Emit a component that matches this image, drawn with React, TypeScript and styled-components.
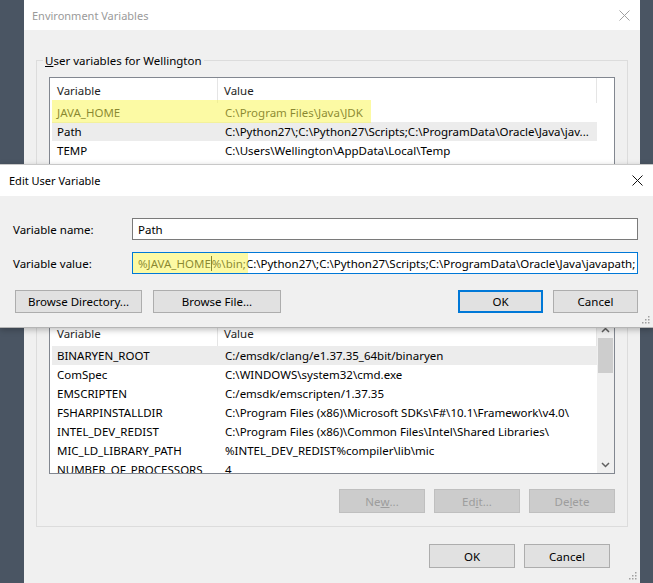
import React from 'react';
import styled, { createGlobalStyle } from 'styled-components';

const GlobalStyle = createGlobalStyle`
  * { box-sizing: border-box; }
  html, body { margin: 0; padding: 0; background: #4a5563; }
  body {
    font-family: "Noto Sans", "Segoe UI", sans-serif;
    font-size: 11.5px;
    color: #000;
  }
`;

const Screen = styled.div`
  position: relative;
  width: 653px;
  height: 583px;
  overflow: hidden;
  background: #4a5563;
  padding-left: 24px;
`;

const MainWindow = styled.div`
  position: relative;
  width: 616px;
  height: 600px;
  background: #f0f0f0;
  display: flex;
  flex-direction: column;
`;

const TitleBar = styled.div<{ $height: number; $pl: number; $pr: number }>`
  height: ${(p) => p.$height}px;
  flex: none;
  background: #fff;
  display: flex;
  align-items: center;
  justify-content: space-between;
  padding: 0 ${(p) => p.$pr}px 0 ${(p) => p.$pl}px;
`;

const TitleText = styled.span<{ $inactive?: boolean }>`
  font-size: 11px;
  color: ${(p) => (p.$inactive ? '#9a9a9a' : '#000')};
`;

const Body = styled.div`
  padding: 22px 12px 0 12px;
  display: flex;
  flex-direction: column;
`;

const GroupBox = styled.fieldset<{ $mt: number }>`
  margin: ${(p) => p.$mt}px 0 0 0;
  border: 1px solid #dcdcdc;
  padding: 8px 12px 13px 12px;
  min-width: 0;
`;

const Legend = styled.legend`
  padding: 1px 2px 0 2px;
  margin-left: -6px;
  line-height: 16px;
  font-size: 11.5px;
`;

const ListView = styled.div`
  height: 154px;
  border: 1px solid #828790;
  background: #fff;
  display: flex;
  overflow: hidden;
`;

const Table = styled.div`
  flex: 1;
  display: flex;
  flex-direction: column;
  min-width: 0;
`;

const HeaderRow = styled.div`
  height: 25px;
  flex: none;
  display: flex;
`;

const HeaderCell = styled.div<{ $w: number; $pl: number }>`
  width: ${(p) => p.$w}px;
  flex: none;
  border-right: 1px solid #e5e5e5;
  padding-left: ${(p) => p.$pl}px;
  display: flex;
  align-items: center;
  color: #1e1e1e;
  white-space: nowrap;
`;

const Row = styled.div<{ $selected?: boolean }>`
  position: relative;
  height: 19px;
  flex: none;
  margin-left: 2px;
  width: 545px;
  display: flex;
  align-items: center;
  background: ${(p) => (p.$selected ? '#ececec' : 'transparent')};
`;

const Cell = styled.div<{ $w: number; $pl: number }>`
  width: ${(p) => p.$w}px;
  flex: none;
  padding-left: ${(p) => p.$pl}px;
  white-space: nowrap;
  overflow: hidden;
`;

const RowMarker = styled.div`
  position: absolute;
  left: 0;
  top: -3px;
  width: 319px;
  height: 23px;
  background: rgba(250, 245, 90, 0.55);
  z-index: 1;
  pointer-events: none;
`;

const ScrollBar = styled.div`
  width: 17px;
  flex: none;
  background: #f0f0f0;
  display: flex;
  flex-direction: column;
`;

const ScrollArrow = styled.div`
  height: 17px;
  flex: none;
  display: flex;
  align-items: center;
  justify-content: center;
`;

const ScrollTrack = styled.div`
  flex: 1;
  display: flex;
  flex-direction: column;
  padding: 0 1px;
`;

const Thumb = styled.div`
  height: 35px;
  background: #cdcdcd;
`;

const ButtonRow = styled.div<{ $mt: number; $pr?: number; $gap: number }>`
  margin-top: ${(p) => p.$mt}px;
  display: flex;
  justify-content: flex-end;
  gap: ${(p) => p.$gap}px;
  padding-right: ${(p) => p.$pr ?? 0}px;
`;

const Button = styled.div<{ $w: number; $h: number; $primary?: boolean; $disabled?: boolean }>`
  width: ${(p) => p.$w}px;
  height: ${(p) => p.$h}px;
  display: flex;
  align-items: center;
  justify-content: center;
  background: ${(p) => (p.$disabled ? '#cccccc' : '#e1e1e1')};
  border: ${(p) => (p.$primary ? '2px solid #0078d7' : p.$disabled ? '1px solid #bfbfbf' : '1px solid #adadad')};
  color: ${(p) => (p.$disabled ? '#9d9d9d' : '#000')};
  font-size: 11.5px;
  white-space: nowrap;
`;

const Dialog = styled.div`
  position: absolute;
  left: 0;
  top: 164px;
  width: 653px;
  height: 164px;
  background: #f0f0f0;
  border-top: 1px solid #c8c8c8;
  border-bottom: 1px solid #b5b5b5;
  box-shadow: 0 2px 6px rgba(0, 0, 0, 0.25);
  display: flex;
  flex-direction: column;
  z-index: 5;
`;

const DialogBody = styled.div`
  padding: 22px 15px 0 13px;
  display: flex;
  flex-direction: column;
`;

const FormRow = styled.div<{ $mt: number }>`
  margin-top: ${(p) => p.$mt}px;
  display: flex;
  align-items: center;
`;

const FormLabel = styled.div`
  width: 119px;
  flex: none;
`;

const TextBox = styled.div<{ $focused?: boolean }>`
  position: relative;
  width: 506px;
  height: 22px;
  background: #fff;
  border: 1px solid ${(p) => (p.$focused ? '#0078d7' : '#7a7a7a')};
  padding-left: 5px;
  display: flex;
  align-items: center;
  white-space: nowrap;
  overflow: hidden;
`;

const InputMarker = styled.div`
  position: absolute;
  left: 0;
  top: 0;
  bottom: 0;
  width: 115px;
  background: rgba(250, 245, 90, 0.55);
  pointer-events: none;
`;

const Caret = styled.span`
  display: inline-block;
  width: 1px;
  height: 15px;
  background: #000;
  vertical-align: middle;
`;

const DialogButtons = styled.div`
  margin-top: 16px;
  padding-left: 2px;
  display: flex;
  justify-content: space-between;
`;

const ButtonGroup = styled.div<{ $gap: number }>`
  display: flex;
  gap: ${(p) => p.$gap}px;
`;

const Grip = styled.svg<{ $r: number; $b: number }>`
  position: absolute;
  right: ${(p) => p.$r}px;
  bottom: ${(p) => p.$b}px;
`;

const CloseIcon = ({ color }: { color: string }) => (
  <svg width="11" height="11" viewBox="0 0 11 11">
    <path d="M0.5 0.5 L10.5 10.5 M10.5 0.5 L0.5 10.5" stroke={color} strokeWidth="1" fill="none" />
  </svg>
);

const Chevron = ({ up }: { up?: boolean }) => (
  <svg width="9" height="6" viewBox="0 0 9 6">
    <path d={up ? 'M1 5 L4.5 1.5 L8 5' : 'M1 1 L4.5 4.5 L8 1'} stroke="#606060" strokeWidth="1.5" fill="none" />
  </svg>
);

const GripDots = ({ r, b }: { r: number; b: number }) => (
  <Grip $r={r} $b={b} width="10" height="10" viewBox="0 0 10 10">
    {[
      [8, 2],
      [5, 5],
      [8, 5],
      [2, 8],
      [5, 8],
      [8, 8],
    ].map(([x, y], i) => (
      <rect key={i} x={x} y={y} width="1.5" height="1.5" fill="#a0a0a0" />
    ))}
  </Grip>
);

type Var = { name: string; value: string; selected?: boolean; marked?: boolean };

const userVars: Var[] = [
  { name: 'JAVA_HOME', value: 'C:\\Program Files\\Java\\JDK', marked: true },
  { name: 'Path', value: 'C:\\Python27\\;C:\\Python27\\Scripts;C:\\ProgramData\\Oracle\\Java\\jav...', selected: true },
  { name: 'TEMP', value: 'C:\\Users\\Wellington\\AppData\\Local\\Temp' },
  { name: 'TMP', value: 'C:\\Users\\Wellington\\AppData\\Local\\Temp' },
];

const systemVars: Var[] = [
  { name: 'BINARYEN_ROOT', value: 'C:/emsdk/clang/e1.37.35_64bit/binaryen', selected: true },
  { name: 'ComSpec', value: 'C:\\WINDOWS\\system32\\cmd.exe' },
  { name: 'EMSCRIPTEN', value: 'C:/emsdk/emscripten/1.37.35' },
  { name: 'FSHARPINSTALLDIR', value: 'C:\\Program Files (x86)\\Microsoft SDKs\\F#\\10.1\\Framework\\v4.0\\' },
  { name: 'INTEL_DEV_REDIST', value: 'C:\\Program Files (x86)\\Common Files\\Intel\\Shared Libraries\\' },
  { name: 'MIC_LD_LIBRARY_PATH', value: '%INTEL_DEV_REDIST%compiler\\lib\\mic' },
  { name: 'NUMBER_OF_PROCESSORS', value: '4' },
  { name: 'OS', value: 'Windows_NT' },
];

const VarList = ({ vars, scroll }: { vars: Var[]; scroll?: boolean }) => (
  <ListView>
    <Table>
      <HeaderRow>
        <HeaderCell $w={168} $pl={7}>Variable</HeaderCell>
        <HeaderCell $w={379} $pl={6}>Value</HeaderCell>
      </HeaderRow>
      {vars.map((v) => (
        <Row key={v.name} $selected={v.selected}>
          {v.marked && <RowMarker />}
          <Cell $w={166} $pl={5}>{v.name}</Cell>
          <Cell $w={379} $pl={7}>{v.value}</Cell>
        </Row>
      ))}
    </Table>
    {scroll && (
      <ScrollBar>
        <ScrollArrow>
          <Chevron up />
        </ScrollArrow>
        <ScrollTrack>
          <Thumb />
        </ScrollTrack>
        <ScrollArrow>
          <Chevron />
        </ScrollArrow>
      </ScrollBar>
    )}
  </ListView>
);

const valueRest = '%\\bin;C:\\Python27\\;C:\\Python27\\Scripts;C:\\ProgramData\\Oracle\\Java\\javapath;';

export default function App() {
  return (
    <>
      <GlobalStyle />
      <Screen>
        <MainWindow>
          <TitleBar $height={30} $pl={8} $pr={10}>
            <TitleText $inactive>Environment Variables</TitleText>
            <CloseIcon color="#a0a0a0" />
          </TitleBar>
          <Body>
            <GroupBox $mt={0}>
              <Legend>
                <u>U</u>ser variables for Wellington
              </Legend>
              <VarList vars={userVars} />
              <ButtonRow $mt={15} $gap={9}>
                <Button $w={86} $h={24}>
                  <u>N</u>ew...
                </Button>
                <Button $w={86} $h={24}>
                  <u>E</u>dit...
                </Button>
                <Button $w={86} $h={24}>
                  <u>D</u>elete
                </Button>
              </ButtonRow>
            </GroupBox>
            <GroupBox $mt={11}>
              <Legend>
                <u>S</u>ystem variables
              </Legend>
              <VarList vars={systemVars} scroll />
              <ButtonRow $mt={15} $gap={9}>
                <Button $w={86} $h={24} $disabled>
                  Ne<u>w</u>...
                </Button>
                <Button $w={86} $h={24} $disabled>
                  Ed<u>i</u>t...
                </Button>
                <Button $w={86} $h={24} $disabled>
                  De<u>l</u>ete
                </Button>
              </ButtonRow>
            </GroupBox>
            <ButtonRow $mt={17} $gap={9} $pr={18}>
              <Button $w={86} $h={24}>OK</Button>
              <Button $w={86} $h={24}>Cancel</Button>
            </ButtonRow>
          </Body>
          <GripDots r={3} b={20} />
        </MainWindow>
        <Dialog>
          <TitleBar $height={31} $pl={9} $pr={10}>
            <TitleText>Edit User Variable</TitleText>
            <CloseIcon color="#111" />
          </TitleBar>
          <DialogBody>
            <FormRow $mt={0}>
              <FormLabel>Variable name:</FormLabel>
              <TextBox>Path</TextBox>
            </FormRow>
            <FormRow $mt={12}>
              <FormLabel>Variable value:</FormLabel>
              <TextBox $focused>
                <InputMarker />
                %JAVA_HOME
                <Caret />
                {valueRest}
              </TextBox>
            </FormRow>
            <DialogButtons>
              <ButtonGroup $gap={11}>
                <Button $w={127} $h={23}>Browse Directory...</Button>
                <Button $w={128} $h={23}>Browse File...</Button>
              </ButtonGroup>
              <ButtonGroup $gap={10}>
                <Button $w={85} $h={23} $primary>OK</Button>
                <Button $w={85} $h={23}>Cancel</Button>
              </ButtonGroup>
            </DialogButtons>
          </DialogBody>
          <GripDots r={3} b={3} />
        </Dialog>
      </Screen>
    </>
  );
}
